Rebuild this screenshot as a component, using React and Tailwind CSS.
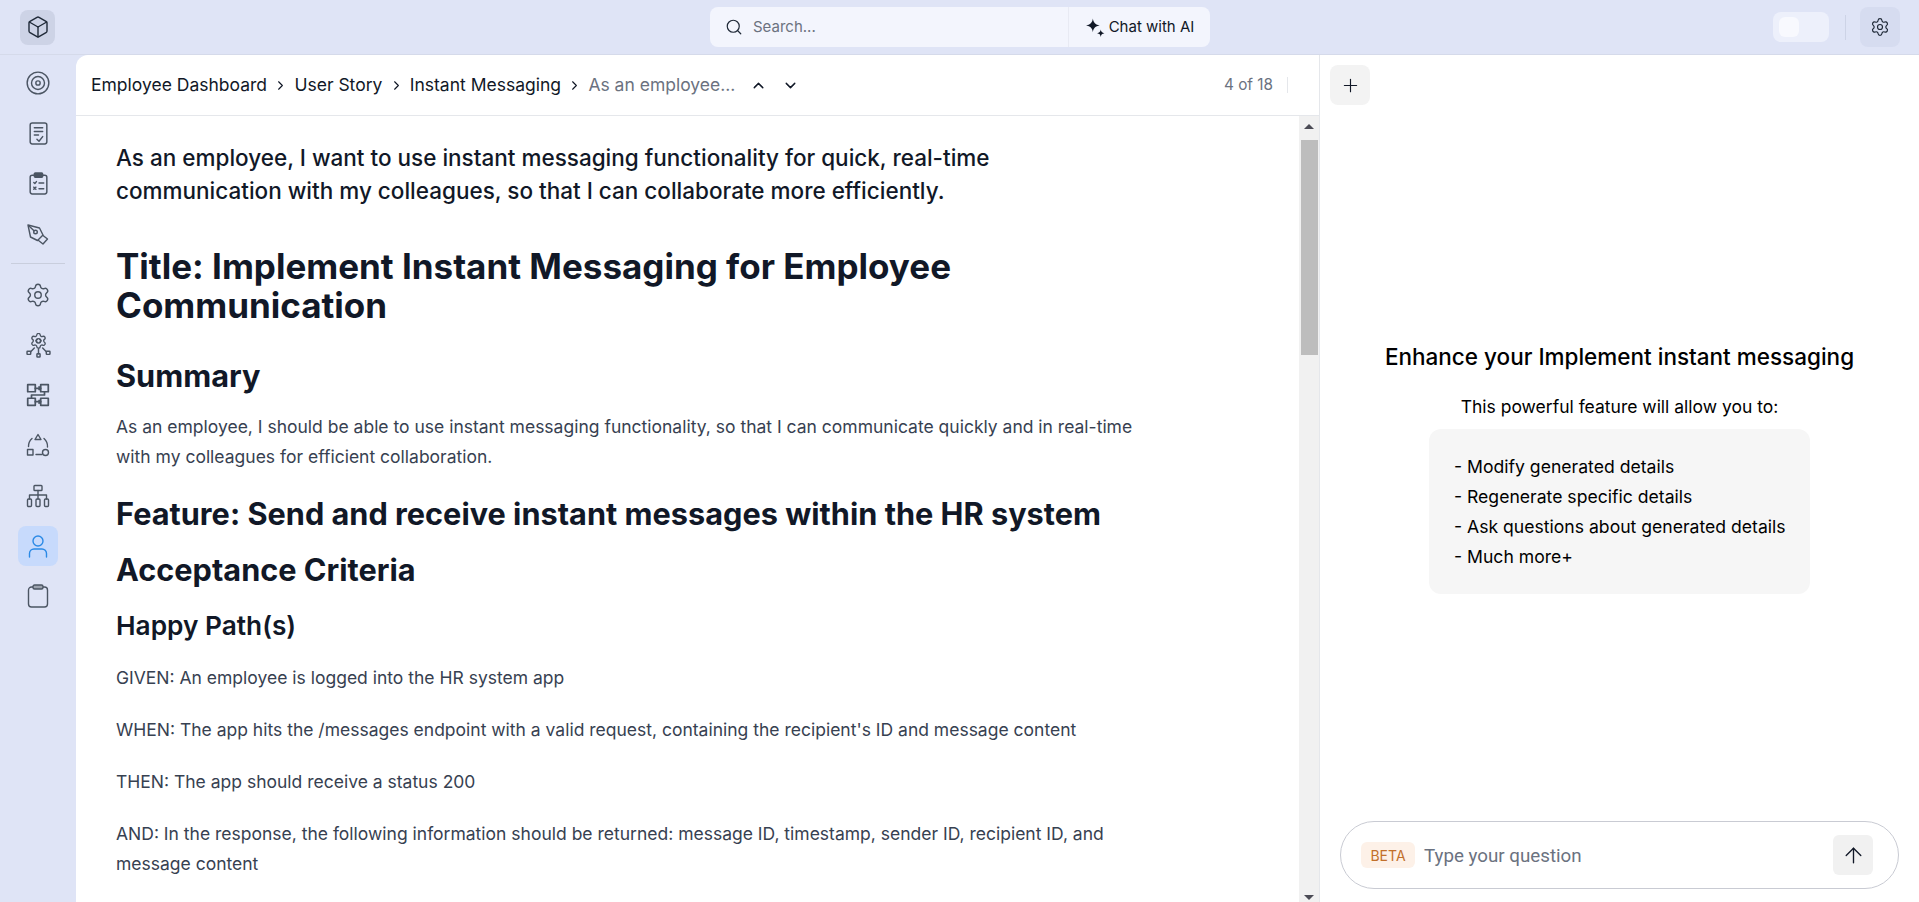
import { ArrowUp, Box, ChevronDown, ChevronRight, ChevronUp, Plus, Search, Settings, Target } from 'lucide-react';

const stroke = {
  fill: 'none',
  stroke: 'currentColor',
  strokeWidth: 1.4,
  strokeLinecap: 'round',
  strokeLinejoin: 'round',
};

const DocCheckIcon = () => (
  <svg width="25" height="25" viewBox="0 0 24 24" {...stroke}>
    <rect x="4" y="2" width="16" height="20" rx="2" />
    <path d="M8 6.500h8M8 10h8M8 13.500h4M10.500 17.500l2 2 3.500-4.500" />
  </svg>
);

const ChecklistIcon = () => (
  <svg width="25" height="25" viewBox="0 0 24 24" {...stroke}>
    <path d="M8 4H6a2 2 0 0 0-2 2v14a2 2 0 0 0 2 2h12a2 2 0 0 0 2-2V6a2 2 0 0 0-2-2h-2" />
    <rect x="8" y="2" width="8" height="4" rx="1" fill="currentColor" />
    <path d="M7.500 11l1 1 1.500-1.800M12.500 11.500h4.500M7.500 15.500l2 2M9.500 15.500l-2 2M12.500 17h4.500" />
  </svg>
);

const PenNibIcon = () => (
  <svg width="24" height="24" viewBox="0 0 24 24" {...stroke}>
    <path d="M2 3l11.500 3 3.500 7-5.500 5.500-7-3.500z" />
    <circle cx="9.500" cy="10" r="1.800" />
    <path d="M3 4l5 4.800M17 13.500l4.500 3.500-4.500 5-4.500-3.500" />
  </svg>
);

const GearNodesIcon = () => (
  <svg width="25" height="25" viewBox="0 0 24 24" {...stroke}>
    <Settings size={17} x={3.500} y={-1} strokeWidth={1.800} />
    <path d="M10.800 6l-1.300 1.500 1.300 1.500M13.200 6l1.300 1.500-1.300 1.500M12 15v5M8 14.500L4.500 18M16 14.500l3.500 3.500" />
    <rect x="1" y="17.500" width="3.500" height="3" rx=".5" />
    <rect x="10.500" y="20" width="3" height="3" rx=".5" />
    <rect x="19.500" y="17.500" width="3.500" height="3" rx=".5" />
  </svg>
);

const FlowIcon = () => (
  <svg width="26" height="26" viewBox="0 0 24 24" {...stroke} strokeWidth="1.600">
    <rect x="2.500" y="2.500" width="7" height="6.500" />
    <rect x="14.500" y="2.500" width="7" height="6.500" />
    <rect x="2.500" y="15" width="7" height="6.500" />
    <rect x="14.500" y="15" width="7" height="6.500" />
    <path d="M9.500 5.800h5M13 4.500l1.500 1.300L13 7M9.500 18.200h5M13 17l1.500 1.200-1.500 1.300M18 9v3H6v3" />
  </svg>
);

const ShapesIcon = () => (
  <svg width="24" height="24" viewBox="0 0 24 24" {...stroke}>
    <path d="M12 1.500l3 5H9z" />
    <rect x="1.500" y="16.500" width="5.500" height="5.500" />
    <circle cx="19.500" cy="19.500" r="3" />
    <path d="M6 5.500A10.500 10.500 0 0 0 2.500 13.500M18 5.500a10.500 10.500 0 0 1 3.500 8.500M10 21.500h6" />
  </svg>
);

const NetworkIcon = () => (
  <svg width="24" height="24" viewBox="0 0 24 24" {...stroke}>
    <rect x="8" y="1.500" width="8" height="5" rx=".8" />
    <path d="M12 6.500V11M3.500 15v-4h17v4M12 11v4" />
    <rect x="1.500" y="15" width="4" height="7.500" rx="1" />
    <rect x="10" y="15" width="4" height="7.500" rx="1" />
    <rect x="18.500" y="15" width="4" height="7.500" rx="1" />
  </svg>
);

const UserIcon = () => (
  <svg width="24" height="24" viewBox="0 0 24 24" {...stroke}>
    <circle cx="12" cy="7" r="5" />
    <path d="M3.500 23v-3.500a4.500 4.500 0 0 1 4.500-4.500h8a4.500 4.500 0 0 1 4.500 4.500V23" />
  </svg>
);

const ClipboardIcon = () => (
  <svg width="22" height="24" viewBox="0 0 22 24" {...stroke}>
    <path d="M6 3H4.500a3 3 0 0 0-3 3v14a3 3 0 0 0 3 3h13a3 3 0 0 0 3-3V6a3 3 0 0 0-3-3H16" />
    <rect x="6" y="1" width="10" height="4" rx="1.500" fill="#9ca3af" />
  </svg>
);

const SparkleIcon = () => (
  <svg width="21" height="21" viewBox="0 0 20 20" fill="currentColor">
    <path d="M7.500 1.500c.5 4 2.500 6 6.500 6.500-4 .5-6 2.500-6.500 6.500C7 10.500 5 8.500 1 8c4-.5 6-2.500 6.500-6.500z" />
    <path d="M15 12c.3 2.200 1.300 3.200 3.500 3.500-2.200.3-3.200 1.300-3.500 3.500-.3-2.200-1.300-3.200-3.500-3.500 2.200-.3 3.200-1.300 3.500-3.500z" />
  </svg>
);

const topIcons = [
  <Target size={26} strokeWidth={1.3} />,
  <DocCheckIcon />,
  <ChecklistIcon />,
  <PenNibIcon />,
];

const bottomIcons = [
  { icon: <Settings size={26} strokeWidth={1.3} /> },
  { icon: <GearNodesIcon /> },
  { icon: <FlowIcon /> },
  { icon: <ShapesIcon /> },
  { icon: <NetworkIcon /> },
  { icon: <UserIcon />, active: true },
  { icon: <ClipboardIcon /> },
];

const crumbs = ['Employee Dashboard', 'User Story', 'Instant Messaging'];

const Sidebar = () => (
  <aside className="flex w-[76px] shrink-0 flex-col items-center text-[#4b5563]">
    <div className="flex flex-col items-center gap-[10.300px] pt-[8px]">
      {topIcons.map((icon, i) => (
        <div key={i} className="flex h-10 w-10 items-center justify-center">{icon}</div>
      ))}
    </div>
    <div className="mt-[9.500px] mb-[10.500px] h-px w-[54px] bg-[#c9cedd]" />
    <div className="flex flex-col items-center gap-[10.200px]">
      {bottomIcons.map((item, i) => (
        <div
          key={i}
          className={`flex h-10 w-10 items-center justify-center rounded-lg ${item.active ? 'bg-[#c7dafc] text-[#2b8ae6]' : ''}`}
        >
          {item.icon}
        </div>
      ))}
    </div>
  </aside>
);

const MainPanel = () => (
  <section className="flex min-w-0 flex-1 flex-col overflow-hidden rounded-tl-xl border-r border-[#e5e7eb] bg-white">
    <div className="flex h-[61px] shrink-0 items-center border-b border-[#e5e7eb] pl-[15px] pr-[31px] text-[17.500px] text-[#111827]">
      {crumbs.map((c) => (
        <span key={c} className="flex items-center">
          {c}
          <ChevronRight size={15} strokeWidth={1.8} className="mx-[6.200px]" />
        </span>
      ))}
      <span className="text-[#6b7280]">As an employee...</span>
      <ChevronUp size={17} strokeWidth={2} className="ml-[15px]" />
      <ChevronDown size={17} strokeWidth={2} className="ml-[15px]" />
      <span className="ml-auto text-[15.300px] text-[#6b7280]">4 of 18</span>
      <span className="ml-[14px] h-4 w-px bg-[#e5e7eb]" />
    </div>
    <div className="flex min-h-0 flex-1">
      <article className="min-w-0 flex-1 overflow-hidden pl-10 pt-[25px] pr-[160px] text-[17.500px] leading-[30px] text-[#374151]">
        <p className="text-[22.500px] font-medium leading-[33px] text-[#111827]">
          As an employee, I want to use instant messaging functionality for quick, real-time communication with my colleagues, so that I can collaborate more efficiently.
        </p>
        <h1 className="mt-[40px] pr-[100px] text-[35px] font-bold leading-[39px] text-[#111827]">
          Title: Implement Instant Messaging for Employee Communication
        </h1>
        <h2 className="mt-[31px] text-[30.700px] font-bold leading-[40px] text-[#111827]">Summary</h2>
        <p className="mt-[16px]">
          As an employee, I should be able to use instant messaging functionality, so that I can communicate quickly and in real-time with my colleagues for efficient collaboration.
        </p>
        <h2 className="mt-[22px] text-[30.700px] font-bold leading-[40px] text-[#111827]">
          Feature: Send and receive instant messages within the HR system
        </h2>
        <h2 className="mt-4 text-[30.700px] font-bold leading-[40px] text-[#111827]">Acceptance Criteria</h2>
        <h3 className="mt-[17px] text-[26.250px] font-semibold leading-[38px] text-[#111827]">Happy Path(s)</h3>
        <p className="mt-[18px]">GIVEN: An employee is logged into the HR system app</p>
        <p className="mt-[22px]">WHEN: The app hits the /messages endpoint with a valid request, containing the recipient's ID and message content</p>
        <p className="mt-[22px]">THEN: The app should receive a status 200</p>
        <p className="mt-[22px]">AND: In the response, the following information should be returned: message ID, timestamp, sender ID, recipient ID, and message content</p>
      </article>
      <div className="flex w-[20px] shrink-0 flex-col items-center bg-[#f1f1f1]">
        <div className="mt-[8px] h-0 w-0 border-x-[5px] border-b-[5px] border-x-transparent border-b-[#4b4b55]" />
        <div className="mt-[11px] h-[215px] w-[17px] bg-[#bdbdbd]" />
        <div className="mt-auto mb-[2px] h-0 w-0 border-x-[5px] border-t-[5px] border-x-transparent border-t-[#4b4b55]" />
      </div>
    </div>
  </section>
);

const ChatPanel = () => (
  <section className="flex w-[599px] shrink-0 flex-col bg-white">
    <div className="px-[10px] pt-[10px]">
      <button className="flex h-10 w-10 items-center justify-center rounded-lg bg-[#f3f3f3] text-[#111827]">
        <Plus size={21} strokeWidth={1.3} />
      </button>
    </div>
    <div className="flex flex-col items-center pt-[238px] text-black">
      <h2 className="text-[22.500px] font-medium leading-[28px]">Enhance your Implement instant messaging</h2>
      <p className="mt-[21px] text-[17.500px] leading-[30px]">This powerful feature will allow you to:</p>
      <ul className="mt-[7px] h-[165px] w-[381px] rounded-xl bg-[#f6f6f6] pl-[25px] pt-[23px] text-[17.600px] leading-[30px]">
        <li>- Modify generated details</li>
        <li>- Regenerate specific details</li>
        <li>- Ask questions about generated details</li>
        <li>- Much more+</li>
      </ul>
    </div>
    <div className="mx-5 mb-[13px] mt-auto flex h-[68px] items-center rounded-full border border-[#c9cbd3] pl-5 pr-[25px]">
      <span className="flex h-[26px] w-[54px] items-center justify-center rounded-md bg-[#fdf1e8] text-[14px] text-[#c2702b]">BETA</span>
      <span className="ml-[9px] mt-[3px] font-['Roboto',sans-serif] text-[18.750px] text-[#6b7280]">Type your question</span>
      <button className="ml-auto flex h-10 w-10 items-center justify-center rounded-md bg-[#f1f1f1] text-[#111827]">
        <ArrowUp size={25} strokeWidth={1.3} />
      </button>
    </div>
  </section>
);

export default function App() {
  return (
    <div className="flex h-[902px] w-[1919px] flex-col overflow-hidden bg-[#dfe4f6] font-['Inter',sans-serif]">
      <header className="relative flex h-[55px] shrink-0 items-center border-b border-[#d5daea] px-5">
        <div className="flex h-[35px] w-[35px] items-center justify-center rounded-lg bg-[#cdd3e6] text-[#1f2937]">
          <Box size={24} strokeWidth={1.4} />
        </div>
        <div className="ml-[655px] flex h-10 w-[500px] items-center rounded-lg bg-[#f3f5fd]">
          <div className="flex flex-1 items-center pl-[15px] text-[15px] text-[#6b7280]">
            <Search size={18} strokeWidth={1.6} className="text-[#1f2937]" />
            <span className="ml-[10px]">Search...</span>
          </div>
          <div className="flex h-full w-[142px] items-center justify-center gap-[3px] border-l border-[#e8eaf3] text-[15px] text-[#111827]">
            <SparkleIcon />
            Chat with AI
          </div>
        </div>
        <div className="ml-auto flex items-center">
          <div className="flex h-[30px] w-[56px] items-center rounded-lg bg-[#edf0fb] pl-[6px]">
            <div className="h-5 w-5 rounded-md bg-[#f8f9fe]" />
          </div>
          <span className="ml-[16px] mr-[14px] h-[25px] w-px bg-[#cdd3e6]" />
          <button className="-mr-[1px] flex h-10 w-10 items-center justify-center rounded-lg bg-[#d6dcf0] text-[#1f2937]">
            <Settings size={20} strokeWidth={1.4} />
          </button>
        </div>
      </header>
      <div className="flex min-h-0 flex-1">
        <Sidebar />
        <MainPanel />
        <ChatPanel />
      </div>
    </div>
  );
}
